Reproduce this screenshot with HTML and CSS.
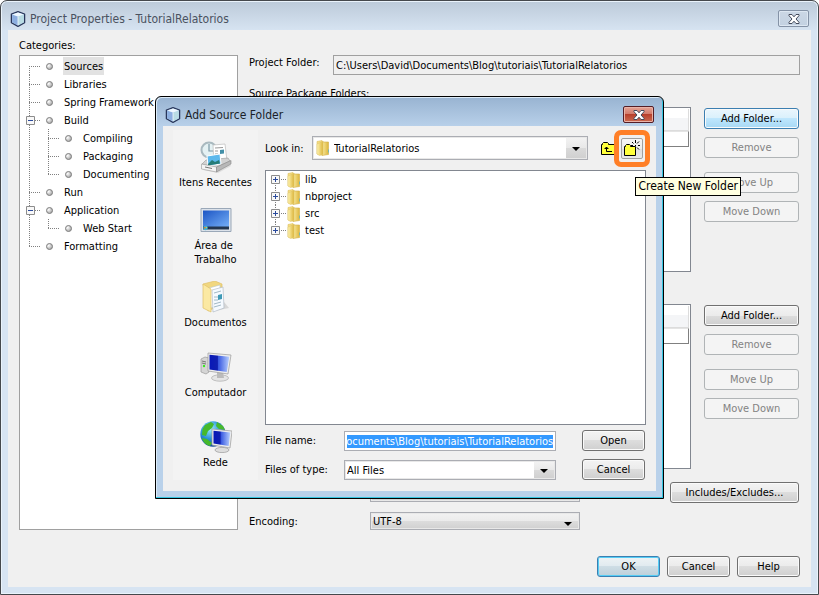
FILE: index.html
```html
<!DOCTYPE html>
<html lang="en">
<head>
<meta charset="utf-8">
<title>Project Properties - TutorialRelatorios</title>
<meta name="viewport" content="width=device-width, initial-scale=1">
<link rel="stylesheet" href="styles.css">
</head>
<body>
<svg class="defs" aria-hidden="true">
  <defs>
    <linearGradient id="gFolder" x1="0" x2="1"><stop offset="0" stop-color="#fff3b0"/><stop offset="1" stop-color="#dcb63c"/></linearGradient>
    <linearGradient id="gScreen" x1="0" y1="0" x2="1" y2="1"><stop offset="0" stop-color="#1c55c4"/><stop offset="1" stop-color="#76b0f8"/></linearGradient>
    <linearGradient id="gMonitor" x1="0" x2="1"><stop offset="0" stop-color="#0818b8"/><stop offset=".4" stop-color="#1020b0"/><stop offset=".45" stop-color="#3858e0"/><stop offset="1" stop-color="#b8d0ff"/></linearGradient>
    <radialGradient id="gGlobe" cx=".4" cy=".3" r=".8"><stop offset="0" stop-color="#a0f0ff"/><stop offset=".5" stop-color="#2890d8"/><stop offset="1" stop-color="#103888"/></radialGradient>
    <radialGradient id="gBullet" cx=".35" cy=".35" r=".7"><stop offset="0" stop-color="#fff"/><stop offset="1" stop-color="#a0a0a0"/></radialGradient>
    <symbol id="cube" viewBox="0 0 16 16">
      <path d="M8 .7 14.6 3v8.8L8 15.4 1.4 11.8V3z" fill="#b5d4ee" stroke="#29365a" stroke-width="1.3" stroke-linejoin="round"/>
      <path d="M2.2 3.6 8 5.8v8.6l-5.8-3.2z" fill="#8caee0"/>
      <path d="M8 5.8l5.8-2.2v7.6L8 14.4z" fill="#b9dce4"/>
      <path d="M8 1.5l5.4 1.9L8 5.5 2.6 3.4z" fill="#eff8ff"/>
      <path d="M8 5.8v8.4" stroke="#f4faff" stroke-width=".8"/>
    </symbol>
    <symbol id="close" viewBox="0 0 12 10">
      <path d="M1 .5h3l2 2.3L8 .5h3v1.2L8 5l3 3.300v1.200H8L6 7.200 4 9.500H1V8.300L4 5 1 1.700z" fill="#fff" stroke="#444b5c"/>
    </symbol>
    <symbol id="bullet" viewBox="0 0 7 7"><circle cx="3.500" cy="3.500" r="3" fill="url(#gBullet)" stroke="#808080"/></symbol>
    <symbol id="minus" viewBox="0 0 9 9"><path d="M.5.5h8v8h-8z" fill="#f8f8f8" stroke="#8c8c8c"/><path d="M2 4.500h5" stroke="#2a4a9c"/></symbol>
    <symbol id="plus" viewBox="0 0 9 9"><path d="M.5.5h8v8h-8z" fill="#f8f8f8" stroke="#8c8c8c"/><path d="M2 4.500h5M4.500 2v5" stroke="#2a4a9c"/></symbol>
    <symbol id="folder" viewBox="0 0 14 16">
      <path d="M1 1.500 6 .5l1 1v13.500l-6-1z" fill="#f4dc80" stroke="#dcc060" stroke-width=".6"/>
      <path d="M5 2h7.500v12.500L6 15.500z" fill="url(#gFolder)" stroke="#d2ae48" stroke-width=".6"/>
      <path d="M7 1.500v13L3.500 15.500 1 14V4z" fill="url(#gFolder)" stroke="#dfc468" stroke-width=".5"/>
      <path d="M12 9.500h1v3h-1z" fill="#78b8b0"/>
    </symbol>
    <symbol id="arrow" viewBox="0 0 8 4"><path d="M0 0h8L4 4z"/></symbol>
  </defs>
</svg>

<main class="window">
  <header class="titlebar">
    <svg class="logo"><use href="#cube"/></svg>
    <h1>Project Properties - TutorialRelatorios</h1>
    <button class="close" type="button" aria-label="Close"><svg><use href="#close"/></svg></button>
  </header>

  <div class="client">
    <div class="columns">
      <section class="categories">
        <h2>Categories:</h2>
        <ul class="tree">
          <li><div class="row"><i></i><svg class="dot"><use href="#bullet"/></svg><span class="selected">Sources</span></div></li>
          <li><div class="row"><i></i><svg class="dot"><use href="#bullet"/></svg><span>Libraries</span></div></li>
          <li><div class="row"><i></i><svg class="dot"><use href="#bullet"/></svg><span>Spring Framework</span></div></li>
          <li><div class="row"><svg class="box"><use href="#minus"/></svg><svg class="dot"><use href="#bullet"/></svg><span>Build</span></div>
            <ul>
              <li><div class="row"><i></i><svg class="dot"><use href="#bullet"/></svg><span>Compiling</span></div></li>
              <li><div class="row"><i></i><svg class="dot"><use href="#bullet"/></svg><span>Packaging</span></div></li>
              <li><div class="row"><i></i><svg class="dot"><use href="#bullet"/></svg><span>Documenting</span></div></li>
            </ul>
          </li>
          <li><div class="row"><i></i><svg class="dot"><use href="#bullet"/></svg><span>Run</span></div></li>
          <li><div class="row"><svg class="box"><use href="#minus"/></svg><svg class="dot"><use href="#bullet"/></svg><span>Application</span></div>
            <ul>
              <li><div class="row"><i></i><svg class="dot"><use href="#bullet"/></svg><span>Web Start</span></div></li>
            </ul>
          </li>
          <li><div class="row"><i></i><svg class="dot"><use href="#bullet"/></svg><span>Formatting</span></div></li>
        </ul>
      </section>

      <section class="details">
        <div class="field">
          <label for="project">Project Folder:</label>
          <input id="project" type="text" readonly value="C:\Users\David\Documents\Blog\tutoriais\TutorialRelatorios">
        </div>
        <h2>Source Package Folders:</h2>
        <div class="package">
          <div class="list"><table><thead><tr><th></th></tr></thead><tbody><tr><td></td></tr></tbody></table></div>
          <div class="actions">
            <button class="btn hot" type="button">Add Folder...</button>
            <button class="btn" type="button" disabled>Remove</button>
            <button class="btn apart" type="button" disabled>Move Up</button>
            <button class="btn" type="button" disabled>Move Down</button>
          </div>
        </div>
        <div class="package second">
          <div class="list"><table><thead><tr><th></th></tr></thead><tbody><tr><td></td></tr></tbody></table></div>
          <div class="actions">
            <button class="btn" type="button">Add Folder...</button>
            <button class="btn" type="button" disabled>Remove</button>
            <button class="btn apart" type="button" disabled>Move Up</button>
            <button class="btn" type="button" disabled>Move Down</button>
          </div>
        </div>
        <div class="option">
          <span></span>
          <div class="combo gray"><select aria-label="Format"><option></option></select><svg><use href="#arrow"/></svg></div>
          <button class="btn wide" type="button">Includes/Excludes...</button>
        </div>
        <div class="option">
          <label for="encoding">Encoding:</label>
          <div class="combo gray"><select id="encoding"><option>UTF-8</option></select><svg><use href="#arrow"/></svg></div>
        </div>
      </section>
    </div>
    <footer>
      <button class="btn default" type="button">OK</button>
      <button class="btn" type="button">Cancel</button>
      <button class="btn" type="button">Help</button>
    </footer>
  </div>
</main>

<div class="dialog" role="dialog" aria-labelledby="dialog-title">
  <header class="titlebar">
    <svg class="logo"><use href="#cube"/></svg>
    <h1 id="dialog-title">Add Source Folder</h1>
    <button class="close red" type="button" aria-label="Close"><svg><use href="#close"/></svg></button>
  </header>
  <div class="chooser">
    <nav class="places">
      <button type="button">
        <svg viewBox="0 0 32 32">
          <path d="M3 29l26-7 2 3-13 7z" fill="#bbb" opacity=".4"/>
          <circle cx="9" cy="9" r="7.500" fill="#e4f1f3" stroke="#a9b9bf" stroke-width="2"/>
          <path d="M9 3v7h5" fill="none" stroke="#7b98a6" stroke-width="1.200"/>
          <path d="M13 4l12-1 2 17-13 3z" fill="#fff" stroke="#bbb" stroke-width=".7"/>
          <path d="M15 7l8-.5M15 10h3M15 13h3" stroke="#999"/><path d="M20 9l4-.5v4l-4 .5z" fill="#4490a8"/>
          <path d="M2 23l4-4 22-2 2 3-14 7z" fill="#d2d2d2" stroke="#999" stroke-width=".6"/>
          <path d="M7 15l13-2 1 10-13 2z" fill="#5bb8ec" stroke="#fff"/><path d="M8 23l4-4 3 2 4-2 1 3.500-12 2z" fill="#267c77"/>
          <path d="M1.500 23l15 3v5l-15-3z" fill="#f4f4f4" stroke="#999" stroke-width=".6"/><path d="M16.500 26L31 19.500v3.500l-14.500 8z" fill="#b8b8b8" stroke="#888" stroke-width=".6"/>
          <path d="M5 26l7 1.500" stroke="#777"/>
        </svg>Itens Recentes</button>
      <button type="button">
        <svg viewBox="0 0 32 32">
          <path d="M1 4.500h30v23H1z" fill="#dce2ea" stroke="#9aa8b8"/><path d="M3 6.500h26v17H3z" fill="url(#gScreen)"/>
          <path d="M3 22.500h26v3H3z" fill="#24364f"/><circle cx="5.500" cy="24" r="2.300" fill="#42b2d4"/><path d="M4 23h1.500v1.500H4z" fill="#e87b2a"/><path d="M6 23h1v1H6z" fill="#b8e24a"/>
        </svg>Área de<br>Trabalho</button>
      <button type="button">
        <svg viewBox="0 0 32 32">
          <path d="M14 30l15-3-5-6z" fill="#bbb" opacity=".5"/>
          <path d="M3 3l12-3 7 3v20L8 30z" fill="#f1d77f" stroke="#dfc069" stroke-width=".7"/>
          <path d="M9 7l11-3v20l-9 3z" fill="#fff" stroke="#b6c8cc" stroke-width=".6"/>
          <path d="M12 9l11-3 1 21-11 4z" fill="#f5faff" stroke="#aab4c0" stroke-width=".6"/>
          <path d="M14 12l7-2M14 16h4M14 19h4M14 23l7-2M14 26l7-2" stroke="#a2b9c6"/><path d="M18 14l4-1v5l-4 1z" fill="#3e9ab6"/>
          <path d="M3 3l8 5v23l-8-4z" fill="#fbe9a3" stroke="#dfc069" stroke-width=".7"/>
        </svg>Documentos</button>
      <button type="button">
        <svg viewBox="0 0 32 32">
          <path d="M1 8l4-2 4 1v14l-3 2-5-2z" fill="#d5d5d5" stroke="#999" stroke-width=".7"/><path d="M2 10l4 1M2 12l4 1" stroke="#777"/><circle cx="4" cy="15" r="1.200" fill="#38e820"/>
          <ellipse cx="20" cy="27" rx="8.500" ry="3.200" fill="#e5e5e5" stroke="#aaa" stroke-width=".7"/><path d="M17 21h6l1 6h-7z" fill="#bbb"/>
          <path d="M8 2l23 2-3 19-20-3z" fill="#eee" stroke="#999" stroke-width=".7"/><path d="M9.500 3.800l19.800 1.900-2.500 15.300-17.300-2.500z" fill="url(#gMonitor)"/>
        </svg>Computador</button>
      <button type="button">
        <svg viewBox="0 0 32 32">
          <circle cx="13" cy="13" r="12.700" fill="url(#gGlobe)"/>
          <path d="M5 4l6-3 3 2-2 4-4 3-2 5-4-1 .5-6zM2 17l5 1 5 4-2 3c-4-1-7-4-8-8zM17 1l6 4 2 4-6-1-3-3z" fill="#46b92b"/>
          <ellipse cx="22" cy="29" rx="7" ry="2.600" fill="#ddd" stroke="#999" stroke-width=".7"/>
          <path d="M12 8l20 2-2 17-18-3z" fill="#eee" stroke="#999" stroke-width=".7"/><path d="M13.500 9.800l16.800 1.700-1.600 13.500-15.200-2.500z" fill="url(#gMonitor)"/>
        </svg>Rede</button>
    </nav>
    <div class="browser">
      <div class="lookin">
        <label for="lookin">Look in:</label>
        <div class="combo tall"><svg class="folder"><use href="#folder"/></svg><select id="lookin"><option>TutorialRelatorios</option></select><span class="drop"><svg><use href="#arrow"/></svg></span></div>
        <button class="tool" type="button" aria-label="Up One Level">
          <svg viewBox="0 0 16 13"><path d="M.5 12.500v-10h1v-1l1-1h4l1 1v1h8v10z" fill="#ffff3c" stroke="#000"/><path d="M5.500 5v4.500H11M3.500 6.500h4M4.500 5.500h2" fill="none" stroke="#000"/></svg>
        </button>
        <button class="tool framed" type="button" aria-label="Create New Folder">
          <svg viewBox="0 0 18 16"><path d="M1.500 15.500v-9h1v-1l1-1h3l1 1v1h5v9z" fill="#ffff3c" stroke="#000"/><path d="M12.500 0v3M12.500 8v3M8 5.500h2M15 5.500h2M9 2l1.500 1.500M14 3.500l2-2M14 7.500l2 2M12 5.500h1" stroke="#000"/></svg>
        </button>
      </div>
      <ul class="files">
        <li><svg class="box"><use href="#plus"/></svg><svg class="folder"><use href="#folder"/></svg>lib</li>
        <li><svg class="box"><use href="#plus"/></svg><svg class="folder"><use href="#folder"/></svg>nbproject</li>
        <li><svg class="box"><use href="#plus"/></svg><svg class="folder"><use href="#folder"/></svg>src</li>
        <li><svg class="box"><use href="#plus"/></svg><svg class="folder"><use href="#folder"/></svg>test</li>
      </ul>
      <div class="entry">
        <label for="filename">File name:</label>
        <input id="filename" type="text" value="C:\Users\David\Documents\Blog\tutoriais\TutorialRelatorios">
        <button class="btn" type="button">Open</button>
        <label for="filetype">Files of type:</label>
        <div class="combo"><select id="filetype"><option>All Files</option></select><span class="drop"><svg><use href="#arrow"/></svg></span></div>
        <button class="btn" type="button">Cancel</button>
      </div>
    </div>
  </div>
  <div class="tooltip" role="tooltip">Create New Folder</div>
</div>
<script src="script.js"></script>
</body>
</html>
```
FILE: styles.css
```css
* { box-sizing: border-box; }
body {
  margin: 0;
  background: #fff;
  color: #000;
  font: 11px/14px Tahoma, "DejaVu Sans Condensed", "Noto Sans", sans-serif;
}
h1, h2, ul { margin: 0; padding: 0; font: inherit; }
ul { list-style: none; }
svg { display: block; flex: none; }
button, input, select { font: inherit; color: inherit; margin: 0; }
h2, label { line-height: 16px; }
.defs { position: absolute; width: 0; height: 0; }

.window {
  display: flex;
  flex-direction: column;
  min-height: 100vh;
  padding: 0 7px 7px;
  border: 1px solid #45484c;
  border-radius: 7px 7px 0 0;
  background: linear-gradient(#bccad9, #d7e4f2 30px);
  box-shadow: inset 0 0 0 1px #eaf3fb;
}
.titlebar { display: flex; align-items: center; gap: 4px; height: 29px; padding: 6px 2px 0; }
.titlebar h1 { flex: 1; font-size: 12px; line-height: 16px; color: #4a5260; }
.logo { width: 16px; height: 16px; }
.close {
  display: flex;
  align-items: center;
  justify-content: center;
  width: 31px;
  height: 17px;
  padding: 0;
  border: 1px solid #8492a6;
  border-radius: 2px;
  background: linear-gradient(#cbd7e5, #c3d1e1);
  box-shadow: inset 0 0 0 1px #dde7f2;
}
.close svg { width: 12px; height: 10px; }
.close.red {
  border-color: #541d26;
  background: linear-gradient(#e5a396, #d37c6c 45%, #b8402c 50%, #cc6a50);
  box-shadow: inset 0 0 0 1px #eab3a8;
}

.client { flex: 1; display: flex; flex-direction: column; padding: 8px 11px 10px; background: #f0f0f0; }
.columns { flex: 1; display: grid; grid-template-columns: 219px 1fr; gap: 11px; }
.categories { display: flex; flex-direction: column; gap: 1px; }
.tree { flex: 1; padding-top: 1px; border: 1px solid #a0a0a0; background: #fff; }
.tree li {
  background:
    repeating-linear-gradient(#808080 0 1px, transparent 1px 2px) 9px 0 / 1px 100% no-repeat,
    repeating-linear-gradient(90deg, #808080 0 1px, transparent 1px 2px) 9px 9px / 12px 1px no-repeat;
}
.tree > li:first-child { background-position: 9px 9px, 9px 9px; }
.tree li:last-child { background-size: 1px 9px, 12px 1px; }
.tree ul { margin-left: 19px; }
.row { display: flex; align-items: center; height: 18px; padding-left: 6px; }
.row i, .box { width: 9px; height: 9px; }
.dot { width: 7px; height: 7px; margin: 0 10px 0 11px; }
.row span { padding: 2px 1px 0; line-height: 16px; white-space: nowrap; }
.row .selected { background: #e2e2e2; }

.details { display: flex; flex-direction: column; min-width: 0; padding-top: 17px; }
.field { display: flex; height: 20px; margin-bottom: 11px; }
.field label { width: 84px; }
.field input { flex: 1; min-width: 0; padding: 1px 2px 0; border: 1px solid #a0a0a0; background: #f0f0f0; }
.package { flex: 1; display: flex; gap: 13px; min-height: 120px; margin-top: 5px; }
.package.second { margin-top: 32px; margin-bottom: 13px; }
.list { flex: 1; padding: 1px 1px 1px 2px; border: 1px solid #828790; background: #fff; }
.list table { width: 100%; border-collapse: separate; border-spacing: 0; }
.list th { height: 22px; padding: 0; border: solid #dcdcdc; border-width: 0 1px 1px 0; background: linear-gradient(#fff 45%, #f4f5f7 45%); }
.list td { height: 16px; padding: 0; border: 1px solid #808080; border-top-color: #e4e4e4; }
.actions { display: flex; flex-direction: column; gap: 8px; width: 95px; padding-top: 1px; margin-right: 1px; }
.apart { margin-top: 6px; }
.option { display: grid; grid-template-columns: 121px 210px 1fr; align-items: center; }
.option .btn { justify-self: end; width: 129px; margin-right: 1px; }
.option + .option { margin-top: 9px; }
.option label { padding-top: 1px; }

.btn {
  height: 21px;
  padding: 0;
  border: 1px solid #707070;
  border-radius: 3px;
  background: linear-gradient(#f3f3f3, #ebebeb 50%, #dddddd 50%, #cfcfcf);
  box-shadow: inset 0 0 0 1px #fafafa;
}
.btn:disabled { border-color: #b0b4b6; background: #f4f4f4; color: #838383; box-shadow: none; }
.btn.hot { border-color: #3c7fb1; background: linear-gradient(#eaf6fd, #d9f0fc 50%, #bee6fd 50%, #a7d9f5); }
.btn.default { border-color: #3c7fb1; background: linear-gradient(#eef3f5, #e0eaef 50%, #cedde5 50%, #bdd0da); box-shadow: inset 0 0 0 1px #55cdf5; }
footer { display: flex; justify-content: flex-end; gap: 7px; margin-top: 26px; }
footer .btn { width: 63px; }

.combo { display: grid; grid-template-columns: 1fr 20px; align-items: center; height: 20px; padding: 1px; border: 1px solid #abadb3; background: #fff; box-shadow: inset 0 0 0 1px #e8e8e8; }
.combo select { grid-area: 1 / 1 / 2 / 3; width: 100%; height: 100%; padding: 1px 20px 0 1px; border: 0; background: none; appearance: none; outline: 0; }
.combo > svg, .drop { grid-area: 1 / 2; pointer-events: none; justify-self: center; }
.combo svg { width: 8px; height: 4px; }
.drop { display: flex; align-items: center; justify-content: center; width: 20px; height: 100%; padding-top: 2px; background: linear-gradient(#f2f2f2, #e8e8e8 50%, #dadada 50%, #d0d0d0); }
.combo.gray { height: 18px; background: linear-gradient(#f2f2f2, #ebebeb 50%, #dddddd 50%, #d0d0d0); }
.combo.gray > svg { height: 4px; margin-top: 4px; }
.combo.tall { flex: 1; height: 24px; }
.combo.tall select { padding-left: 20px; }
.combo .folder { grid-area: 1 / 1; justify-self: start; margin-left: 2px; }
svg.folder, .combo svg.folder { width: 14px; height: 16px; }

.dialog {
  position: absolute;
  top: 96px;
  left: 155px;
  right: 155px;
  padding: 0 7px 7px;
  border: 1px solid #000;
  border-radius: 6px 6px 0 0;
  background: linear-gradient(#98b3d1, #b9d1ea 30px);
  box-shadow: inset -1px -1px 0 #35c5e0, inset 1px 1px 0 #dcebf8;
}
.dialog h1 { color: #1a1f28; }
.chooser { display: flex; gap: 7px; padding: 4px 10px 11px; background: #f0f0f0; }
.places { display: flex; flex-direction: column; flex: none; width: 85px; background: #f3f3f3; }
.places button {
  display: flex;
  flex-direction: column;
  align-items: center;
  justify-content: center;
  gap: 3px;
  height: 70px;
  padding: 0;
  border: 0;
  background: none;
  white-space: nowrap;
  text-align: left;
}
.places svg { width: 32px; height: 32px; }
.browser { flex: 1; display: flex; flex-direction: column; min-width: 0; padding-top: 6px; }
.lookin { display: flex; align-items: center; height: 24px; padding-right: 3px; }
.lookin label { width: 47px; padding-top: 1px; }
.tool { position: relative; display: flex; align-items: center; justify-content: center; width: 22px; height: 21px; padding: 0; border: 0; background: none; }
.tool svg { width: 16px; height: 13px; }
.combo + .tool { margin: 0 1px 0 10px; }
.tool.framed { border: 1px solid #a0a0a0; border-radius: 2px; background: linear-gradient(#f6f6f6, #ececec 50%, #dedede 50%, #e8e8e8); }
.tool.framed svg { width: 18px; height: 16px; }
.tool.framed::after { content: ""; position: absolute; inset: -9px -8px; border: 5px solid #ff7f27; border-radius: 7px; }
.files { flex: 1; margin: 10px 0 5px; border: 1px solid #828790; background: #fff; }
.files li {
  display: flex;
  align-items: center;
  height: 17px;
  padding-left: 5px;
  line-height: 17px;
  background:
    repeating-linear-gradient(#808080 0 1px, transparent 1px 2px) 9px 0 / 1px 100% no-repeat,
    repeating-linear-gradient(90deg, #808080 0 1px, transparent 1px 2px) 15px 8px / 6px 1px no-repeat;
}
.files li:first-child { background-position: 9px 8px, 15px 8px; }
.files li:last-child { background-size: 1px 8px, 6px 1px; }
.files .folder { margin: 0 4px 0 7px; }
.entry { display: grid; grid-template-columns: 79px 1fr 63px; row-gap: 8px; align-items: center; padding-right: 1px; }
.entry input, .entry .combo { height: 20px; margin-top: 1px; margin-right: 26px; }
.entry label { padding-top: 1px; }
.entry input { min-width: 0; padding: 1px 2px 0; border: 1px solid #abadb3; background: #fff; outline: 0; }
.entry input::selection { background: #3399ff; color: #fff; }
.tooltip {
  position: absolute;
  top: 80px;
  right: -78px;
  padding: 1px 2px;
  border: 1px solid #000;
  background: #ffffe1;
  font-size: 12px;
  line-height: 15px;
  white-space: nowrap;
}
```
FILE: script.js
```js
const filename = document.getElementById('filename');
filename.focus();
filename.select();
filename.scrollLeft = filename.scrollWidth;
```
